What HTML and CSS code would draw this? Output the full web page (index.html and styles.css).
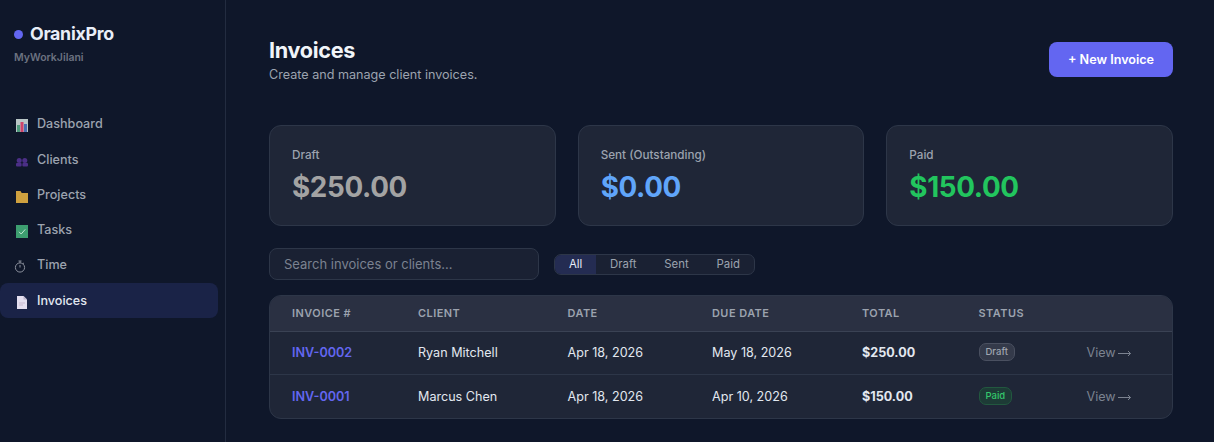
FILE: index.html
```html
<!DOCTYPE html>
<html lang="en">
<head>
    <meta charset="UTF-8">
    <meta name="viewport" content="width=device-width, initial-scale=1.0">
    <title>Invoices - OranixPro</title>
    <link rel="stylesheet" href="styles.css">
</head>
<body>
    <aside class="sidebar">
        <div class="brand"><span class="brand-dot"></span>OranixPro</div>
        <div class="workspace">MyWorkJilani</div>
        <nav class="nav">
            <a class="nav-item">
                <svg class="nav-icon" viewBox="0 0 12 13"><rect width="12" height="13" fill="#b9c6c6"/><rect x="1" y="6" width="3" height="7" fill="#4f9a7c"/><rect x="4.5" y="3" width="3" height="10" fill="#d0436a"/><rect x="8" y="5" width="3" height="8" fill="#4a6fb0"/></svg>
                Dashboard
            </a>
            <a class="nav-item">
                <svg class="nav-icon" viewBox="0 0 12 13" fill="#4b2f86"><circle cx="3.2" cy="5.4" r="2.5"/><circle cx="8.8" cy="5.4" r="2.5"/><rect y="8" width="5.6" height="3.6" rx="1"/><rect x="6.4" y="8" width="5.6" height="3.6" rx="1"/></svg>
                Clients
            </a>
            <a class="nav-item">
                <svg class="nav-icon" viewBox="0 0 12 13"><path d="M0 1h4.5l1.2 2H12v10H0z" fill="#cfa13f"/></svg>
                Projects
            </a>
            <a class="nav-item">
                <svg class="nav-icon" viewBox="0 0 12 13"><rect width="12" height="13" fill="#3d9e70"/><path d="M3 6.8l2.2 2.2L9.2 4.4" fill="none" stroke="#bfe6d0" stroke-width="1"/></svg>
                Tasks
            </a>
            <a class="nav-item">
                <svg class="nav-icon icon-time" viewBox="0 0 12 13" fill="none" stroke="#8b909c"><circle cx="6" cy="7.5" r="4.6"/><path d="M4.5 1h3M6 1v2M6 7.5V5M10 2.8l-.9.9"/></svg>
                Time
            </a>
            <a class="nav-item active">
                <svg class="nav-icon" viewBox="0 0 12 13"><path d="M1 0h6.5L11 3.5V13H1z" fill="#e4dff0"/><path d="M7.5 0v3.5H11z" fill="#bdb6cc"/><path d="M3 6.5h6v1H3zM3 8.5h4v1H3z" fill="#c7b9cf"/></svg>
                Invoices
            </a>
        </nav>
    </aside>

    <main class="main">
        <header class="page-head">
            <div>
                <h1>Invoices</h1>
                <p class="subtitle">Create and manage client invoices.</p>
            </div>
            <button class="new-btn">+ New Invoice</button>
        </header>

        <section class="stats">
            <div class="stat-card">
                <div class="stat-label">Draft</div>
                <div class="stat-value draft">$250.00</div>
            </div>
            <div class="stat-card">
                <div class="stat-label">Sent (Outstanding)</div>
                <div class="stat-value sent">$0.00</div>
            </div>
            <div class="stat-card">
                <div class="stat-label">Paid</div>
                <div class="stat-value paid">$150.00</div>
            </div>
        </section>

        <div class="toolbar">
            <input class="search" type="text" placeholder="Search invoices or clients...">
            <div class="filters">
                <span class="filter current">All</span>
                <span class="filter">Draft</span>
                <span class="filter">Sent</span>
                <span class="filter">Paid</span>
            </div>
        </div>

        <div class="table-wrap">
            <table>
                <thead>
                    <tr>
                        <th class="col-num">Invoice #</th>
                        <th class="col-client">Client</th>
                        <th class="col-date">Date</th>
                        <th class="col-due">Due Date</th>
                        <th class="col-total">Total</th>
                        <th class="col-status">Status</th>
                        <th></th>
                    </tr>
                </thead>
                <tbody>
                    <tr>
                        <td><a class="inv-link">INV-0002</a></td>
                        <td>Ryan Mitchell</td>
                        <td>Apr 18, 2026</td>
                        <td>May 18, 2026</td>
                        <td class="total">$250.00</td>
                        <td><span class="badge badge-draft">Draft</span></td>
                        <td class="view"><span class="view-link">View <svg class="arrow" viewBox="0 0 13 7"><path d="M0 3.5h12.5M10 1l2.5 2.5L10 6"/></svg></span></td>
                    </tr>
                    <tr>
                        <td><a class="inv-link">INV-0001</a></td>
                        <td>Marcus Chen</td>
                        <td>Apr 18, 2026</td>
                        <td>Apr 10, 2026</td>
                        <td class="total">$150.00</td>
                        <td><span class="badge badge-paid">Paid</span></td>
                        <td class="view"><span class="view-link">View <svg class="arrow" viewBox="0 0 13 7"><path d="M0 3.5h12.5M10 1l2.5 2.5L10 6"/></svg></span></td>
                    </tr>
                </tbody>
            </table>
        </div>
    </main>
</body>
</html>
```

FILE: styles.css
```css
* {
    box-sizing: border-box;
}
html, body {
    height: 100%;
    overflow: hidden;
}
body {
    margin: 0;
    display: flex;
    font-family: Inter, "Liberation Sans", sans-serif;
    background: #0f172a;
    color: #e2e8f0;
}
.sidebar {
    width: 226px;
    flex-shrink: 0;
    border-right: 1px solid #232c40;
    padding: 23px 7px 0 0;
}
.brand {
    display: flex;
    align-items: center;
    gap: 7px;
    padding-left: 14px;
    font-size: 17.8px;
    font-weight: 700;
    line-height: 22px;
    letter-spacing: -0.3px;
    color: #e8eef8;
}
.brand-dot {
    width: 9px;
    height: 9px;
    border-radius: 50%;
    background: #6366f1;
}
.workspace {
    margin-top: 6px;
    padding-left: 14px;
    font-size: 10.5px;
    font-weight: 600;
    line-height: 14px;
    color: #6b7280;
}
.nav {
    margin-top: 41.4px;
    display: flex;
    flex-direction: column;
}
.nav-item {
    display: flex;
    align-items: center;
    height: 35.2px;
    padding-left: 16px;
    gap: 9px;
    font-size: 12.6px;
    font-weight: 500;
    color: #9ca3af;
}
.nav-icon {
    width: 12px;
    height: 13px;
    margin-top: 4px;
}
.icon-time {
    margin-left: -2px;
    margin-right: 2px;
}
.nav-item.active {
    height: 35px;
    margin-top: 1px;
    border-radius: 8px;
    background: #1a2347;
    color: #e2e8f0;
}
.main {
    flex: 1;
    padding: 38px 41px 0 43px;
}
.page-head {
    display: flex;
    justify-content: space-between;
    align-items: flex-start;
}
h1 {
    margin: 0;
    font-size: 21.6px;
    font-weight: 700;
    line-height: 25px;
    letter-spacing: -0.3px;
    color: #f1f5f9;
}
.subtitle {
    margin: 4px 0 0;
    font-size: 12.6px;
    line-height: 16px;
    color: #9ca3af;
}
.new-btn {
    width: 124px;
    height: 35px;
    margin-top: 4px;
    border: 0;
    border-radius: 8px;
    background: #6366f1;
    color: #fff;
    font-family: inherit;
    font-size: 12.6px;
    font-weight: 600;
}
.stats {
    display: grid;
    grid-template-columns: repeat(3, 1fr);
    gap: 22px;
    margin-top: 42px;
}
.stat-card {
    height: 101px;
    padding: 22px 22px 0;
    background: #1f2637;
    border: 1px solid #2d3648;
    border-radius: 12px;
}
.stat-label {
    font-size: 11.7px;
    font-weight: 500;
    line-height: 14px;
    color: #9ca3af;
}
.stat-value {
    margin-top: 8px;
    font-size: 27.8px;
    font-weight: 700;
    line-height: 34px;
    letter-spacing: -0.35px;
}
.draft { color: #a3a3a3; }
.sent { color: #60a5fa; }
.paid { color: #22c55e; }
.toolbar {
    display: flex;
    align-items: center;
    gap: 15px;
    margin-top: 22px;
}
.search {
    width: 270px;
    height: 32px;
    padding: 0 14px;
    background: #1a2133;
    border: 1px solid #2d3648;
    border-radius: 8px;
    color: #e2e8f0;
    font-family: inherit;
    font-size: 13px;
}
.search::placeholder {
    color: #7b8290;
    opacity: 1;
}
.filters {
    display: flex;
    height: 21px;
    background: #1a2133;
    border: 1px solid #2d3648;
    border-radius: 7px;
    overflow: hidden;
}
.filter {
    display: flex;
    align-items: center;
    padding: 0 13.9px;
    font-size: 11.4px;
    color: #9ca3af;
}
.filter.current {
    background: #242c52;
    color: #e8eef8;
}
.table-wrap {
    margin-top: 15px;
    background: #1f2637;
    border: 1px solid #2d3648;
    border-radius: 12px;
    overflow: hidden;
}
table {
    width: 100%;
    border-collapse: collapse;
    table-layout: fixed;
}
th {
    height: 35px;
    padding: 0 0 0 22px;
    text-align: left;
    background: #2a3042;
    border-bottom: 1px solid #3a4254;
    font-size: 10.9px;
    font-weight: 600;
    letter-spacing: 0.5px;
    text-transform: uppercase;
    color: #9ca3af;
}
.col-num { width: 126px; }
.col-client { width: 149.5px; }
.col-date { width: 144.5px; }
.col-due { width: 150px; }
.col-total { width: 116.5px; }
.col-status { width: 108px; }
td {
    height: 44px;
    padding: 0 0 0 22px;
    border-top: 1px solid #2d3648;
    font-size: 12.6px;
    color: #e2e8f0;
}
tbody tr:first-child td {
    height: 43px;
    border-top: 0;
    padding-bottom: 1px;
}
.inv-link {
    color: #6366f1;
    font-weight: 600;
}
.total {
    font-weight: 700;
}
.view {
    color: #7b8290;
}
.view-link {
    display: inline-flex;
    align-items: center;
    gap: 2px;
}
.arrow {
    width: 13px;
    height: 7px;
    margin-top: 2px;
    fill: none;
    stroke: #7b8290;
    stroke-width: 1;
}
.badge {
    display: inline-block;
    padding: 2px 6px;
    border-radius: 7px;
    font-size: 9.5px;
    font-weight: 500;
    line-height: 12px;
    vertical-align: middle;
}
.badge-draft {
    background: #343a4a;
    border: 1px solid #4a5060;
    color: #a0a6b0;
}
.badge-paid {
    background: #1d3b36;
    border: 1px solid #22583f;
    color: #34c76c;
}
```
